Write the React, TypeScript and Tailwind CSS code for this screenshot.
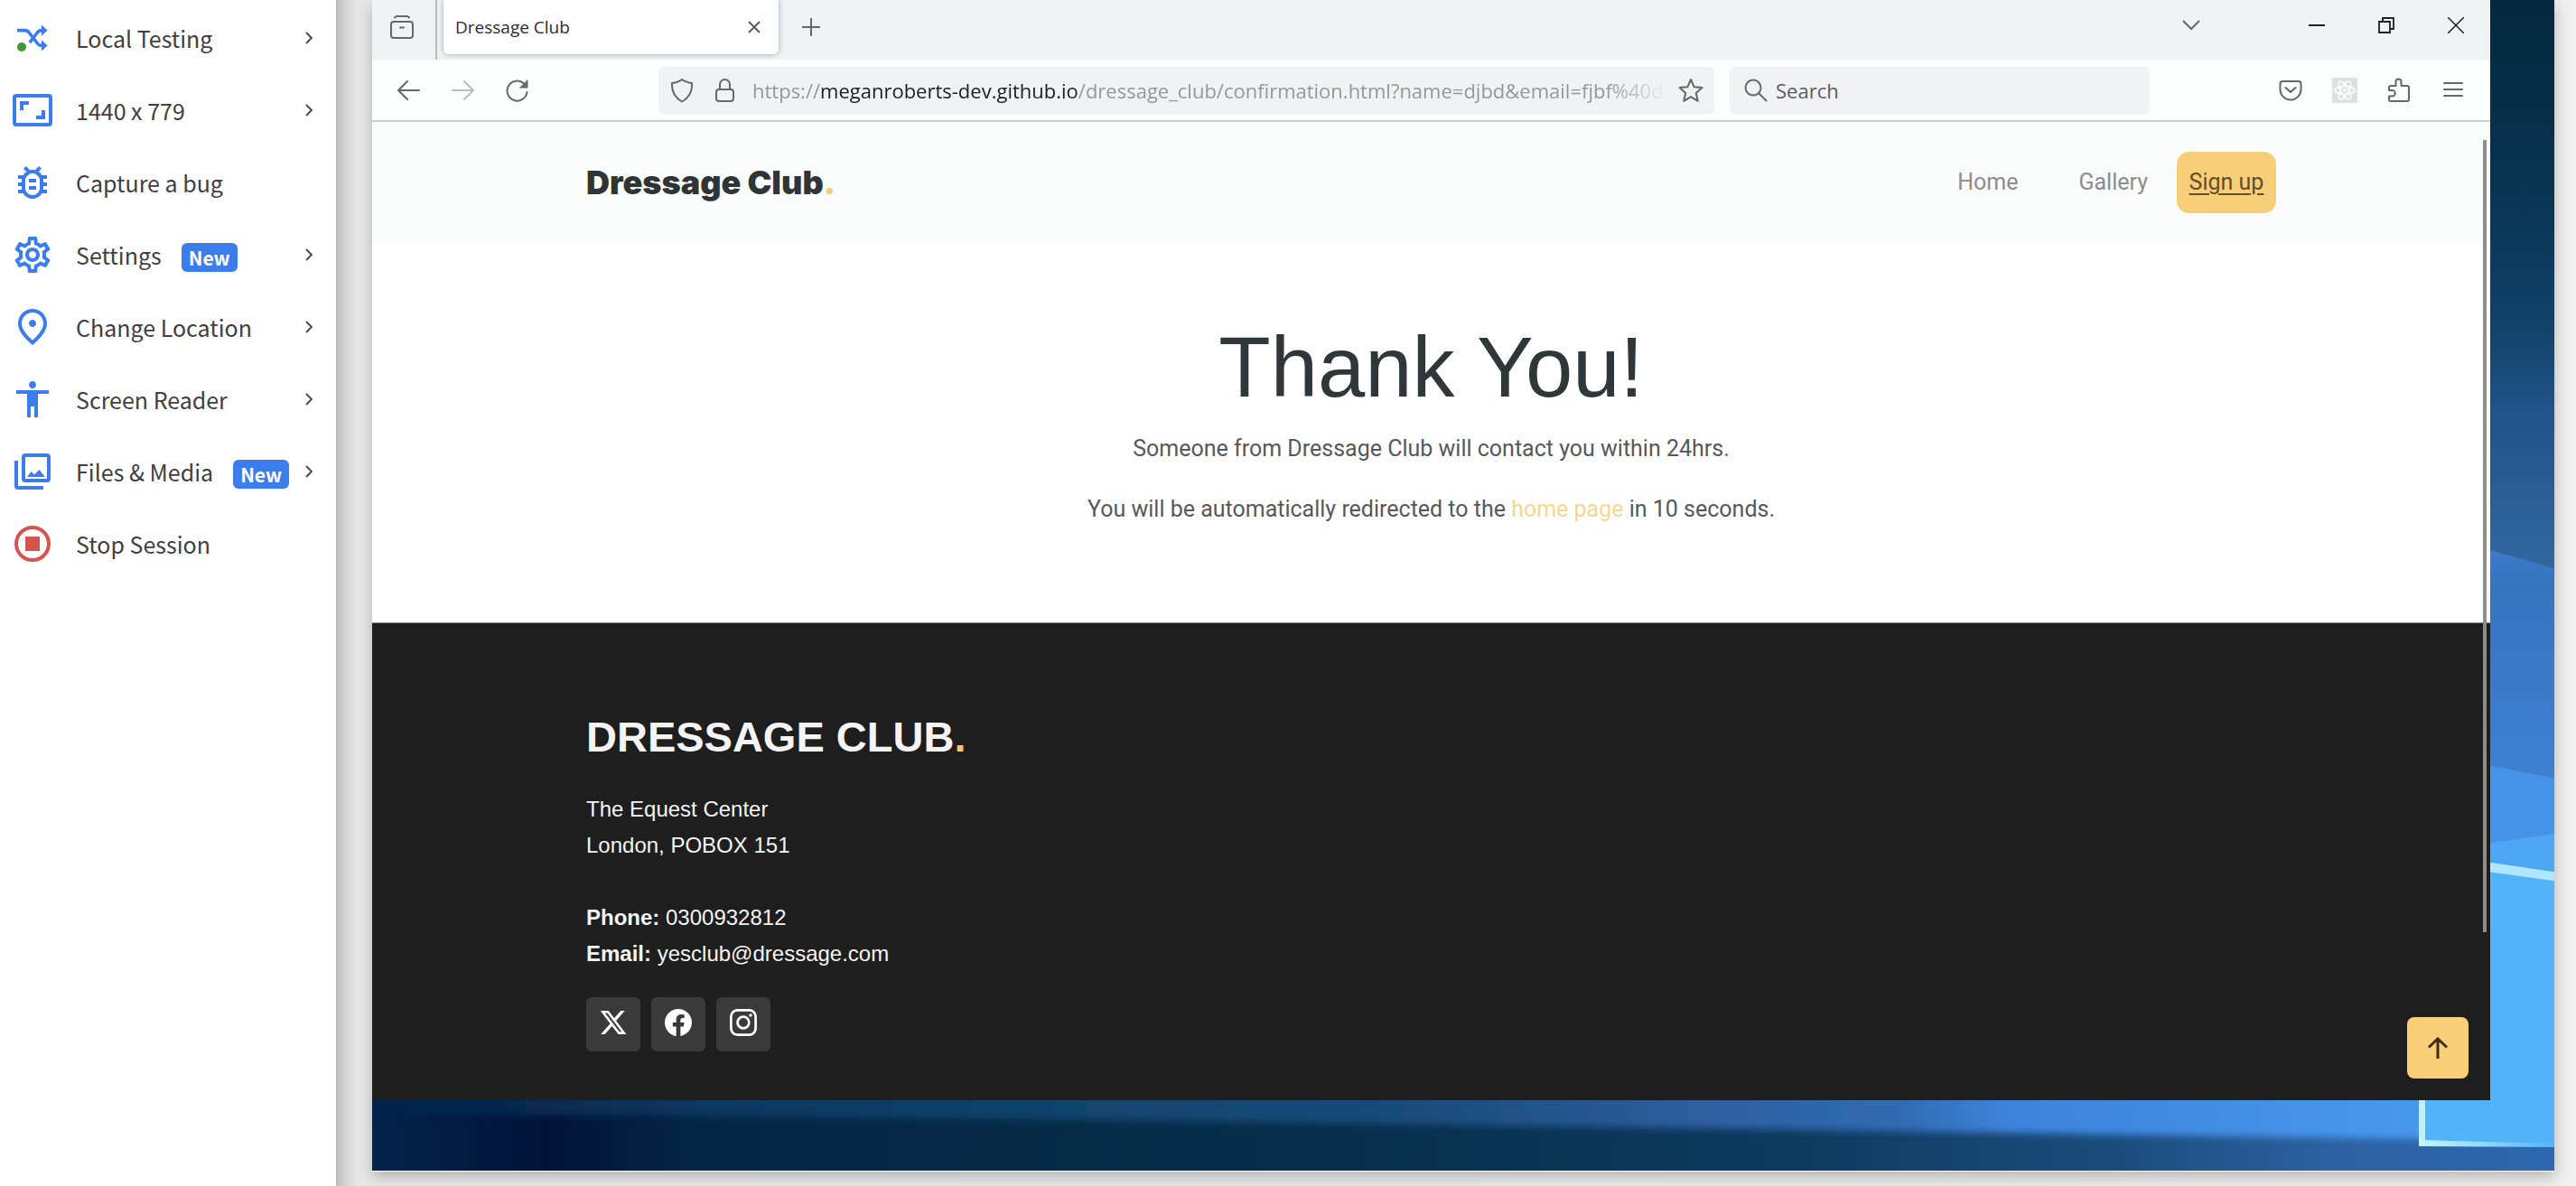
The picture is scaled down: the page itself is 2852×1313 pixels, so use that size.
import type { ReactNode } from "react";
import { MdOutlineBugReport, MdOutlineSettings, MdOutlinePlace, MdAccessibility } from "react-icons/md";
import { FaXTwitter } from "react-icons/fa6";
import { BsFacebook, BsInstagram } from "react-icons/bs";

function ShuffleIcon() {
  return (
    <svg viewBox="0 0 24 24" className="size-12" aria-hidden="true">
      <path d="M3.500 7.800h4.300c1 0 1.700.4 2.300 1.200l4.600 6c.6.8 1.300 1.200 2.300 1.200h1.500M18.500 7.800h-1.500c-1 0-1.700.4-2.300 1.200l-4.300 5.600" fill="none" stroke="#3b7ded" strokeWidth="1.800" />
      <path d="M17 4.700l3.300 3.100-3.300 3.100zM17 13.100l3.300 3.100-3.300 3.100z" fill="#3b7ded" />
      <circle cx="6" cy="17" r="2.500" fill="#46943c" />
    </svg>
  );
}

function ResolutionIcon() {
  return (
    <svg viewBox="0 0 24 24" className="size-12" fill="none" stroke="#3b7ded" strokeWidth="2" aria-hidden="true">
      <rect x="2" y="4" width="20" height="16" rx="1" />
      <path d="M6 12V8h4M18 12v4h-4" />
    </svg>
  );
}

function MediaIcon() {
  return (
    <svg viewBox="0 0 24 24" className="size-12" fill="none" stroke="#3b7ded" strokeWidth="2" aria-hidden="true">
      <rect x="7" y="3" width="14" height="14" rx="1" />
      <path d="M3 6v14c0 .6.4 1 1 1h14" />
      <path d="M9 15l2.300-3 1.700 1.800 2.700-2.800L19 15z" fill="#3b7ded" stroke="none" />
    </svg>
  );
}

function StopIcon() {
  return (
    <svg viewBox="0 0 24 24" className="size-12" aria-hidden="true">
      <circle cx="12" cy="12" r="9" fill="none" stroke="#d1564f" strokeWidth="2" />
      <rect x="8" y="8" width="8" height="8" fill="#d1564f" />
    </svg>
  );
}

type Item = { label: string; icon: ReactNode; badge?: boolean; arrow?: boolean };

const items: Item[] = [
  { label: "Local Testing", icon: <ShuffleIcon />, arrow: true },
  { label: "1440 x 779", icon: <ResolutionIcon />, arrow: true },
  { label: "Capture a bug", icon: <MdOutlineBugReport className="size-12" /> },
  { label: "Settings", icon: <MdOutlineSettings className="size-12" />, badge: true, arrow: true },
  { label: "Change Location", icon: <MdOutlinePlace className="size-12" />, arrow: true },
  { label: "Screen Reader", icon: <MdAccessibility className="size-12" />, arrow: true },
  { label: "Files & Media", icon: <MediaIcon />, badge: true, arrow: true },
  { label: "Stop Session", icon: <StopIcon /> },
];

function Sidebar() {
  return (
    <aside className="w-[372px] shrink-0 bg-white pt-0.5 font-['Noto_Sans_CJK_SC',sans-serif]">
      <ul>
        {items.map((it) => (
          <li key={it.label}>
            <button type="button" className="flex h-20 w-full items-center pr-6 pl-3 text-[#3b7ded]">
              {it.icon}
              <span className="ml-6 text-[25px] leading-10 text-[#404040]">{it.label}</span>
              {it.badge && (
                <span className="mt-1.5 ml-[22px] h-8 rounded-md bg-[#3b7ded] px-2 text-[21px] leading-8 font-bold text-white">New</span>
              )}
              {it.arrow && (
                <svg viewBox="0 0 14 14" className="ml-auto size-3.5" fill="none" stroke="#454545" strokeWidth="1.800" aria-hidden="true">
                  <path d="M5 1l6 6-6 6" />
                </svg>
              )}
            </button>
          </li>
        ))}
      </ul>
    </aside>
  );
}

function Ic({ children, className = "size-7" }: { children: ReactNode; className?: string }) {
  return (
    <svg viewBox="0 0 28 28" className={className} fill="none" stroke="currentColor" strokeWidth="2" strokeLinecap="round" strokeLinejoin="round" aria-hidden="true">
      {children}
    </svg>
  );
}

function TabStrip() {
  return (
    <div className="flex h-[66px] items-start bg-[#f1f2f4] text-[#66666b]">
      <button type="button" aria-label="View recent browsing" className="flex h-full w-[72px] items-center justify-center border-r-2 border-[#b9babd] pr-1 pb-2">
        <Ic>
          <rect x="2" y="9" width="24" height="18" rx="3" />
          <path d="M6 4.500c.5-1 1.500-1.500 2.500-1.500h11c1 0 2 .5 2.500 1.500M12 15.500h4" />
        </Ic>
      </button>
      <div className="ml-[7px] flex h-[60px] w-[371px] items-center justify-between rounded-b-md bg-white pr-4 pl-[13px] shadow-[0_0_6px_rgba(0,40,60,0.35)]">
        <span className="font-['Open_Sans',sans-serif] text-[19px] leading-6 text-[#2c2a35]">Dressage Club</span>
        <button type="button" aria-label="Close tab" className="p-1">
          <svg viewBox="0 0 14 14" className="size-3.5" stroke="#55555a" strokeWidth="1.800" aria-hidden="true"><path d="M1 1l12 12M13 1L1 13" /></svg>
        </button>
      </div>
      <button type="button" aria-label="New tab" className="ml-[26px] flex h-[60px] items-center">
        <svg viewBox="0 0 20 20" className="size-5" stroke="#66666b" strokeWidth="2" aria-hidden="true"><path d="M10 0v20M0 10h20" /></svg>
      </button>
      <div className="ml-auto flex h-14 items-center text-[#1f1f1f]">
        <button type="button" aria-label="List all tabs" className="mr-[90px] text-[#66666b]">
          <svg viewBox="0 0 20 12" className="h-3 w-5" fill="none" stroke="currentColor" strokeWidth="2" aria-hidden="true"><path d="M1 1l9 9 9-9" /></svg>
        </button>
        <div className="flex">
          <button type="button" aria-label="Minimize" className="flex w-[77px] items-center justify-center">
            <svg viewBox="0 0 18 18" className="size-[18px]" stroke="currentColor" strokeWidth="2" aria-hidden="true"><path d="M0 9h18" /></svg>
          </button>
          <button type="button" aria-label="Restore" className="flex w-[77px] items-center justify-center">
            <svg viewBox="0 0 18 18" className="size-[18px]" fill="none" stroke="currentColor" strokeWidth="1.800" aria-hidden="true"><path d="M1 5h12v12H1zM5 5V1h12v12h-4" /></svg>
          </button>
          <button type="button" aria-label="Close" className="flex w-[77px] items-center justify-center">
            <svg viewBox="0 0 18 18" className="size-[18px]" stroke="currentColor" strokeWidth="1.500" aria-hidden="true"><path d="M0 0l18 18M18 0L0 18" /></svg>
          </button>
        </div>
      </div>
    </div>
  );
}

function NavBar() {
  return (
    <div className="flex h-[69px] items-center border-b-2 border-[#cdcfcf] bg-[#fcfdfd] font-['Open_Sans',sans-serif] text-[#66666b]">
      <div className="flex w-[317px] shrink-0 items-center gap-8 pl-[26px]">
        <button type="button" aria-label="Back"><Ic><path d="M26 14H3M13 4L3 14l10 10" /></Ic></button>
        <button type="button" aria-label="Forward" className="text-[#bcbcbf]"><Ic><path d="M3 14h23M16 4l10 10-10 10" /></Ic></button>
        <button type="button" aria-label="Reload">
          <Ic><path d="M25.500 16A11 11 0 1 1 22 6.500" /><path d="M26 3v8h-8z" fill="currentColor" strokeWidth="1" /></Ic>
        </button>
      </div>
      <div className="flex h-[52px] min-w-0 flex-1 items-center rounded-md bg-[#f1f2f4] px-3">
        <Ic className="size-7 shrink-0"><path d="M14 2c3 2.500 6.500 3.500 11 4 .5 9-3 16-11 20.500C6 22 2.500 15 3 6c4.500-.5 8-1.500 11-4z" /></Ic>
        <Ic className="ml-5 size-7 shrink-0"><rect x="4" y="13" width="19" height="13" rx="3" /><path d="M8 13V7.500a5.500 5.500 0 0 1 11 0V13" /></Ic>
        <div role="textbox" tabIndex={0} aria-label="Address" className="ml-4 min-w-0 flex-1 overflow-hidden text-[22px] leading-8 whitespace-nowrap text-[#97979b] [mask-image:linear-gradient(to_right,black_calc(100%-70px),transparent)]">
          https://<span className="text-[#1e1c27]">meganroberts-dev.github.io</span>/dressage_club/confirmation.html?name=djbd&amp;email=fjbf%40d
        </div>
        <button type="button" aria-label="Bookmark this page" className="ml-3">
          <Ic><path d="M14 2l3.600 8.200 8.900.9-6.700 5.900 1.900 8.800L14 21.200l-7.700 4.600 1.900-8.800-6.700-5.900 8.900-.9z" /></Ic>
        </button>
      </div>
      <div className="ml-[17px] flex h-[52px] w-[465px] items-center rounded-md bg-[#f1f2f4] px-[15px]">
        <Ic className="size-7 shrink-0"><circle cx="11" cy="11" r="8.500" /><path d="M17.500 17.500l8 8" /></Ic>
        <input aria-label="Search" placeholder="Search" className="ml-2 min-w-0 flex-1 bg-transparent text-[22px] leading-8 placeholder:text-[#5b5b62]" />
      </div>
      <div className="ml-[142px] flex items-center gap-8 pr-[27px]">
        <button type="button" aria-label="Save to Pocket"><Ic><path d="M5 4h18c1.500 0 2.500 1 2.500 2.500V13a11.500 11.500 0 0 1-23 0V6.500C2.500 5 3.500 4 5 4zM8.500 11l5.500 5 5.500-5" /></Ic></button>
        <button type="button" aria-label="React Developer Tools">
          <svg viewBox="0 0 28 28" className="size-7" aria-hidden="true">
            <rect width="28" height="28" fill="#dfe0e0" />
            <g fill="none" stroke="#fff" strokeWidth="1.500">
              <ellipse cx="14" cy="14" rx="11" ry="4.500" />
              <ellipse cx="14" cy="14" rx="11" ry="4.500" transform="rotate(60 14 14)" />
              <ellipse cx="14" cy="14" rx="11" ry="4.500" transform="rotate(120 14 14)" />
            </g>
            <circle cx="14" cy="14" r="2" fill="#fff" />
          </svg>
        </button>
        <button type="button" aria-label="Extensions"><Ic><path d="M5 9h5.500V4.500a3 3 0 0 1 6 0V9H23c1 0 2 1 2 2v13c0 1-1 2-2 2H5c-1 0-2-1-2-2v-3.500h3.500a3.200 3.200 0 0 0 0-6.500H3v-3c0-1 1-2 2-2z" /></Ic></button>
        <button type="button" aria-label="Open application menu"><Ic><path d="M4 6h20M4 13h20M4 20h20" /></Ic></button>
      </div>
    </div>
  );
}

function SitePage() {
  return (
    <div className="relative flex flex-1 flex-col bg-white">
      <header className="bg-[#fafbfb]">
        <div className="mx-auto flex h-[134px] w-full max-w-[1871px] items-center justify-between">
          <a href="#top" className="font-['Inter',sans-serif] text-[36px] leading-12 font-black text-[#2f3436]">Dressage Club<span className="text-[#f5cd79]">.</span></a>
          <nav className="flex items-center font-[Roboto,sans-serif] text-[25px] text-[#8b8d8f]">
            <a href="#home" className="mr-[67px]">Home</a>
            <a href="#gallery" className="mr-8">Gallery</a>
            <a href="#signup" className="flex h-[68px] w-[110px] items-center justify-center rounded-[14px] bg-[#f6cf78] text-[#654d28] underline underline-offset-4">Sign up</a>
          </nav>
        </div>
      </header>
      <main className="px-8 pt-[82px] pb-[105px] text-center font-[Roboto,sans-serif] text-[25px] leading-10 text-[#55595c]">
        <h1 className="mb-3.5 font-['Liberation_Sans',sans-serif] text-[94px] leading-28 font-normal text-[#30373a]">Thank You!</h1>
        <p>Someone from Dressage Club will contact you within 24hrs.</p>
        <p className="mt-[27px]">You will be automatically redirected to the <a href="#home" className="text-[#f5d78f]">home page</a> in 10 seconds.</p>
      </main>
      <footer className="flex-1 border-t border-[#8d8d8d] bg-[#1e1e1e] pt-[98px] pb-[52px] font-['Liberation_Sans',sans-serif] text-[#f4f4f4]">
        <div className="mx-auto w-full max-w-[1871px]">
          <h2 className="text-[47px] leading-14 font-bold">DRESSAGE CLUB<span className="text-[#f6c868]">.</span></h2>
          <address className="mt-8 text-2xl leading-10 not-italic">
            <p>The Equest Center</p>
            <p>London, POBOX 151</p>
            <p className="mt-10"><strong>Phone:</strong> 0300932812</p>
            <p><strong>Email:</strong> yesclub@dressage.com</p>
          </address>
          <div className="mt-7 flex gap-3 text-white">
            <a href="#x" aria-label="X" className="flex size-15 items-center justify-center rounded-md bg-[#3a3a3a] pb-1"><FaXTwitter className="size-8" /></a>
            <a href="#facebook" aria-label="Facebook" className="flex size-15 items-center justify-center rounded-md bg-[#3a3a3a] pb-1"><BsFacebook className="size-[30px]" /></a>
            <a href="#instagram" aria-label="Instagram" className="flex size-15 items-center justify-center rounded-md bg-[#3a3a3a] pb-1"><BsInstagram className="size-[30px]" /></a>
          </div>
        </div>
      </footer>
      <div className="absolute top-5 right-1 h-[81%] w-1 bg-[#8c8e8e]" />
      <a href="#top" aria-label="Back to top" className="absolute right-6 bottom-6 flex size-17 items-center justify-center rounded-lg bg-[#f8cf76]">
        <svg viewBox="0 0 24 24" className="size-6" fill="none" stroke="#3f2c14" strokeWidth="3" aria-hidden="true"><path d="M12 24V2M2 11.500L12 2l10 9.500" /></svg>
      </a>
    </div>
  );
}

function Wallpaper() {
  return (
    <svg viewBox="0 0 2416 1297" preserveAspectRatio="none" className="absolute inset-0 size-full" aria-hidden="true">
      <defs>
        <linearGradient id="sky" x1="0" y1="0" x2="0" y2="1">
          <stop offset="0" stopColor="#05293f" />
          <stop offset="0.150" stopColor="#08324f" />
          <stop offset="0.280" stopColor="#12426a" />
          <stop offset="0.350" stopColor="#205488" />
          <stop offset="0.480" stopColor="#32669f" />
        </linearGradient>
        <linearGradient id="mid" x1="0" y1="0" x2="0" y2="1">
          <stop offset="0" stopColor="#3c7dcb" />
          <stop offset="0.200" stopColor="#3674bf" />
          <stop offset="1" stopColor="#3f80d2" />
        </linearGradient>
        <linearGradient id="floor" gradientUnits="userSpaceOnUse" x1="0" y1="0" x2="2416" y2="0">
          <stop offset="0" stopColor="#03234a" />
          <stop offset="0.080" stopColor="#021339" />
          <stop offset="0.150" stopColor="#042546" />
          <stop offset="0.280" stopColor="#062a46" />
          <stop offset="0.450" stopColor="#072f4c" />
          <stop offset="0.650" stopColor="#0d3a5e" />
          <stop offset="0.800" stopColor="#1c4c7c" />
          <stop offset="0.900" stopColor="#2d61a2" />
          <stop offset="1" stopColor="#2d68ae" />
        </linearGradient>
        <linearGradient id="band" gradientUnits="userSpaceOnUse" x1="0" y1="0" x2="2416" y2="0">
          <stop offset="0" stopColor="#04234b" />
          <stop offset="0.080" stopColor="#072a50" />
          <stop offset="0.150" stopColor="#0b3760" />
          <stop offset="0.280" stopColor="#0f4269" />
          <stop offset="0.480" stopColor="#1a4c7b" />
          <stop offset="0.620" stopColor="#2f60a2" />
          <stop offset="0.700" stopColor="#306bb2" />
          <stop offset="0.750" stopColor="#3e83dc" />
          <stop offset="1" stopColor="#4a9ff2" />
        </linearGradient>
        <linearGradient id="edge" x1="0" y1="0" x2="1" y2="0">
          <stop offset="0" stopColor="#c8f5ff" />
          <stop offset="1" stopColor="#54b4f8" />
        </linearGradient>
        <filter id="soft" x="-5%" y="-50%" width="110%" height="200%"><feGaussianBlur stdDeviation="4" /></filter>
      </defs>
      <rect width="2416" height="1297" fill="url(#sky)" />
      <path d="M2300 596L2416 630V862H2300z" fill="url(#mid)" />
      <path d="M2300 840L2416 862V980H2300z" fill="#4593e8" />
      <path d="M2300 940L2416 924V980H2300z" fill="#4ca6f4" />
      <rect y="1200" width="2416" height="97" fill="url(#floor)" />
      <path d="M-40 1190H2456V1264L2266 1262 1600 1252 900 1242 300 1236-40 1234z" fill="url(#band)" filter="url(#soft)" />
      <path d="M2300 955L2416 968V1268H2270V1200h30z" fill="#52b3f9" />
      <path d="M2300 949L2416 966v10L2300 960z" fill="#aee7ff" />
      <path d="M2266 1200h7v66h-7z" fill="#bdf0ff" />
      <path d="M2266 1263L2416 1267v4L2266 1270z" fill="url(#edge)" />
    </svg>
  );
}

export default function App() {
  return (
    <div id="top" className="flex min-h-screen bg-[#f0f0f0]">
      <Sidebar />
      <div className="flex min-w-0 flex-1 flex-col bg-[linear-gradient(to_right,#bcbcbc,#d4d4d4_10px,#e6e6e6_24px,#eaeaea_40px,#ececec_50%,#f0f0f0)] pr-6 pb-4 pl-10">
        <div className="relative flex flex-1 flex-col border-b border-white pr-[71px] pb-[78px] shadow-[0_6px_16px_rgba(0,0,0,0.25)]">
          <Wallpaper />
          <div className="relative flex flex-1 flex-col">
            <TabStrip />
            <NavBar />
            <SitePage />
          </div>
        </div>
      </div>
    </div>
  );
}
